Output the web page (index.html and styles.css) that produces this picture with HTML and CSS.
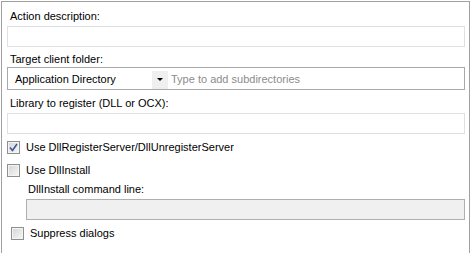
FILE: index.html
```html
<!DOCTYPE html>
<html lang="en">
<head>
    <meta charset="UTF-8">
    <title>Register library</title>
    <link rel="stylesheet" href="styles.css">
</head>
<body>
    <div class="panel">
        <div class="label first">Action description:</div>
        <input type="text" class="text-box">

        <div class="label">Target client folder:</div>
        <div class="combo">
            <div class="combo-value">Application Directory</div>
            <div class="combo-btn"><span class="arrow"></span></div>
            <div class="combo-hint">Type to add subdirectories</div>
        </div>

        <div class="label lib">Library to register (DLL or OCX):</div>
        <input type="text" class="text-box">

        <label class="check-row row-reg">
            <span class="check checked">
                <svg width="9" height="9" viewBox="0 0 9 9"><path d="M1 4.5 L3.5 7.5 L8 1" fill="none" stroke="#3c5796" stroke-width="1.6"/></svg>
            </span>
            Use DllRegisterServer/DllUnregisterServer
        </label>
        <label class="check-row row-install">
            <span class="check"></span>
            Use DllInstall
        </label>

        <div class="label sub">DllInstall command line:</div>
        <input type="text" class="text-box sub-box" disabled>

        <label class="check-row row-suppress">
            <span class="check"></span>
            Suppress dialogs
        </label>
    </div>
</body>
</html>
```

FILE: styles.css
```css
body {
    margin: 0;
    font-family: "Liberation Sans", Arial, sans-serif;
    font-size: 11px;
    color: #000;
    background: #fff;
}
.panel {
    margin: 1px 0 0 1px;
    width: 462px;
    height: 252px;
    box-sizing: border-box;
    width: 469px;
    border: 1px solid #a0a0a0;
    border-bottom: none;
    padding: 0 4px 0 5px;
    display: flex;
    flex-direction: column;
}
.label {
    line-height: 13px;
    padding-left: 3px;
    margin-top: 6px;
}
.label.first {
    margin-top: 8px;
}
.label.lib {
    margin-top: 7px;
}
.label.sub {
    padding-left: 21px;
    margin-top: 6px;
}
.text-box {
    display: block;
    margin: 3px 0 0 0;
    height: 21px;
    box-sizing: border-box;
    border: 1px solid #dde0e5;
    background: #fff;
    padding: 0 4px;
    font: inherit;
}
.text-box.sub-box {
    margin-left: 19px;
    background: #f0f0f0;
    border-color: #afafaf;
}
.combo {
    margin-top: 1px;
    height: 23px;
    box-sizing: border-box;
    border: 1px solid #a9a9a9;
    display: flex;
    align-items: center;
}
.combo-value {
    width: 137px;
    padding-left: 7px;
}
.combo-btn {
    width: 16px;
    align-self: stretch;
    margin-top: 3px;
    background: #efefef;
    display: flex;
    align-items: center;
    justify-content: center;
}
.arrow {
    width: 0;
    height: 0;
    border-left: 3px solid transparent;
    border-right: 3px solid transparent;
    border-top: 3px solid #000;
    margin-top: -2px;
}
.combo-hint {
    padding-left: 3px;
    color: #8c8c8c;
}
.check-row {
    display: flex;
    align-items: center;
    line-height: 13px;
    gap: 6px;
}
.row-reg {
    margin-top: 7px;
}
.row-install {
    margin-top: 10px;
}
.row-suppress {
    margin: 7px 0 0 4px;
}
.check {
    width: 13px;
    height: 13px;
    box-sizing: border-box;
    border: 1px solid #8e8f8f;
    background: linear-gradient(135deg, #d6d6d6, #f6f6f6);
    box-shadow: inset 0 0 0 1px #f4f4f4;
    display: flex;
    align-items: center;
    justify-content: center;
}
```
